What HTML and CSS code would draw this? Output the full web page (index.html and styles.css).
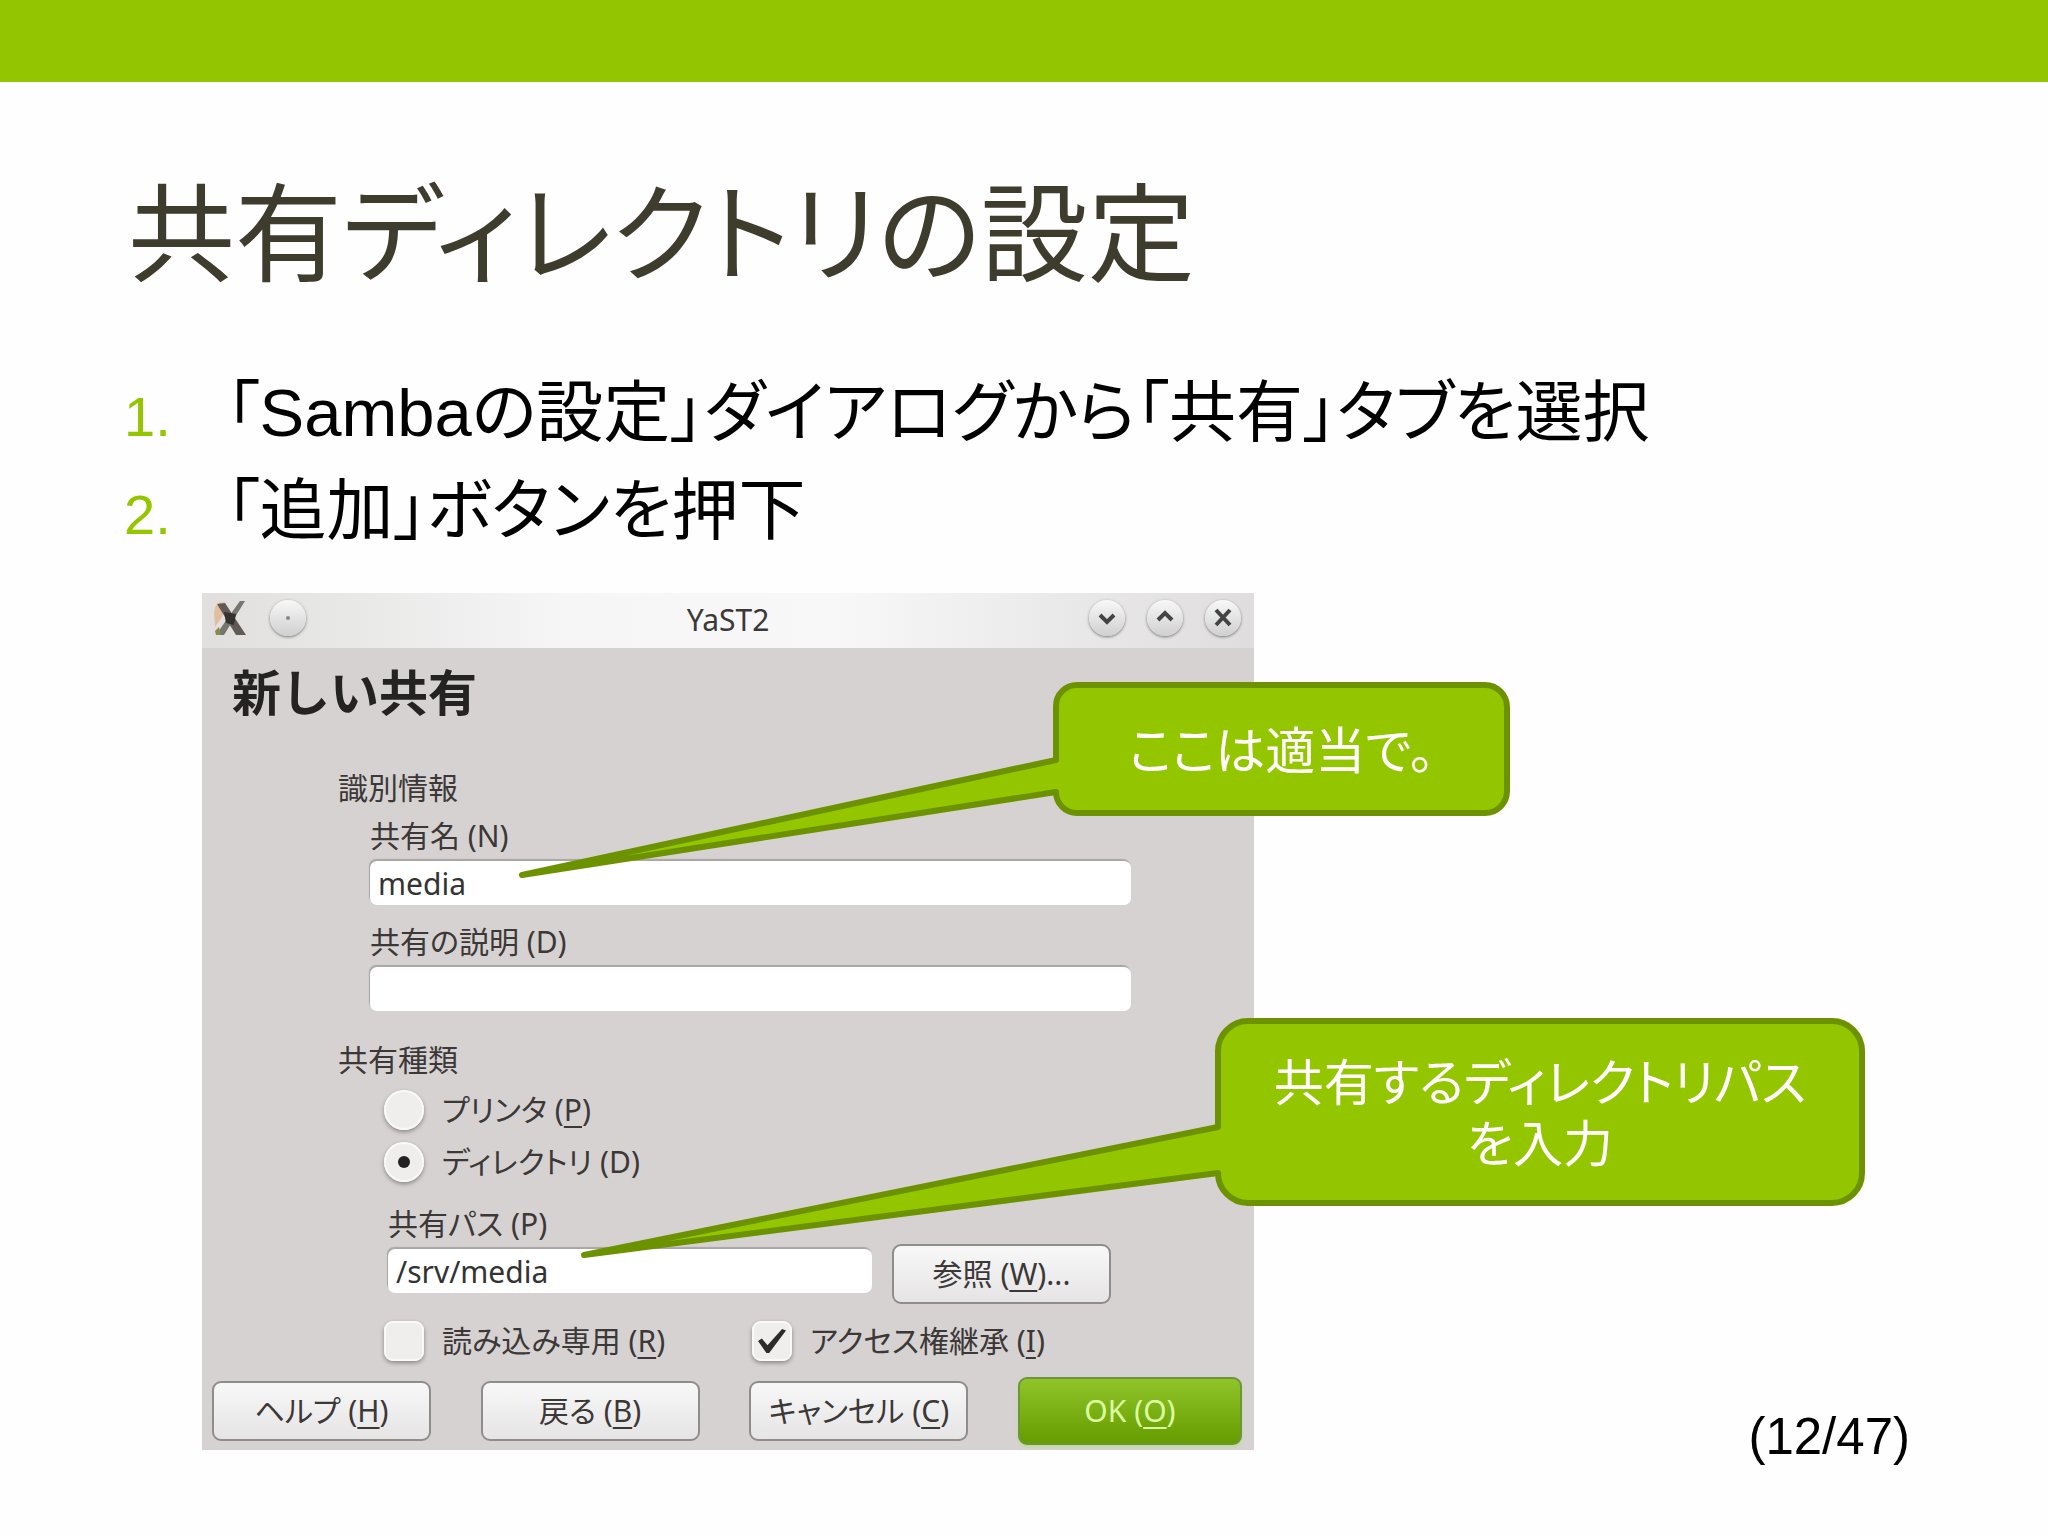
FILE: index.html
```html
<!DOCTYPE html>
<html lang="ja">
<head>
<meta charset="utf-8">
<title>共有ディレクトリの設定</title>
<link rel="stylesheet" href="styles.css">
</head>
<body>
<main class="slide">
  <h1 class="title">共有ディレクトリの設定</h1>
  <ol class="steps">
    <li><span class="num">1.</span><span>「Sambaの設定」ダイアログから「共有」タブを選択</span></li>
    <li><span class="num">2.</span><span>「追加」ボタンを押下</span></li>
  </ol>
  <div class="stage">
    <div class="figure">
      <section class="dialog">
        <header class="titlebar">
          <svg class="app-icon" viewBox="0 0 36 38" aria-hidden="true">
            <path d="M2 14 C3 4 8 2 14 4 L10 18 L3 28 Z" fill="#e3a778" opacity=".6"/>
            <path d="M5 5 L13 4 L34 36 L24 36 Z" fill="#625b55"/>
            <path d="M28 2 L33 2 L12 36 L4 36 L15 20 Z" fill="#77756f"/>
            <path d="M12 13 L24 15 L22 26 L14 24 Z" fill="#35312e"/>
            <path d="M3 32 L7 28 L9 36 L4 36 Z" fill="#8a8b4b"/>
          </svg>
          <button class="round" type="button" aria-label="メニュー"><svg viewBox="0 0 36 36"><circle cx="18" cy="18" r="2" fill="#888"/></svg></button>
          <span class="caption">YaST2</span>
          <div class="controls">
            <button class="round" type="button" aria-label="最小化"><svg viewBox="0 0 36 36"><path d="M11 15 L18 22 L25 15"/></svg></button>
            <button class="round" type="button" aria-label="最大化"><svg viewBox="0 0 36 36"><path d="M11 20 L18 13 L25 20"/></svg></button>
            <button class="round" type="button" aria-label="閉じる"><svg viewBox="0 0 36 36"><path d="M11 10 L25 25 M25 10 L11 25"/></svg></button>
          </div>
        </header>
        <form class="form">
          <h2>新しい共有</h2>
          <h3>識別情報</h3>
          <div class="group">
            <div class="field">
              <label for="name">共有名 (N)</label>
              <input id="name" type="text" value="media">
            </div>
            <div class="field">
              <label for="desc">共有の説明 (D)</label>
              <input id="desc" type="text">
            </div>
          </div>
          <h3 class="kind">共有種類</h3>
          <div class="options">
            <div class="choice"><input id="printer" type="radio" name="kind"><label for="printer">プリンタ (<u>P</u>)</label></div>
            <div class="choice"><input id="dir" type="radio" name="kind" checked><label for="dir">ディレクトリ (D)</label></div>
            <div class="path">
              <div class="field">
                <label for="path">共有パス (P)</label>
                <input id="path" type="text" value="/srv/media">
              </div>
              <button class="btn" type="button">参照 (<u>W</u>)...</button>
            </div>
            <div class="checks">
              <div class="choice"><input id="ro" type="checkbox"><label for="ro">読み込み専用 (<u>R</u>)</label></div>
              <div class="choice"><input id="acl" type="checkbox" checked><label for="acl">アクセス権継承 (<u>I</u>)</label></div>
            </div>
          </div>
          <footer class="actions">
            <button class="btn" type="button">ヘルプ (<u>H</u>)</button>
            <button class="btn" type="button">戻る (<u>B</u>)</button>
            <button class="btn" type="button">キャンセル (<u>C</u>)</button>
            <button class="btn ok" type="button">OK (<u>O</u>)</button>
          </footer>
        </form>
      </section>
      <div class="callout callout-name">
        <svg viewBox="0 0 994 200" aria-hidden="true"><path d="M558 6 H966 a22 22 0 0 1 22 22 V112 a22 22 0 0 1 -22 22 H558 a21 21 0 0 1 -21 -21 L3 196 L537 81 V27 a21 21 0 0 1 21 -21 Z"/></svg>
        <p>ここは適当で。</p>
      </div>
      <div class="callout callout-path">
        <svg viewBox="0 0 1288 244" aria-hidden="true"><path d="M668 6 H1252 a30 30 0 0 1 30 30 V158 a30 30 0 0 1 -30 30 H668 a30 30 0 0 1 -30 -30 L4 240 L638 112 V36 a30 30 0 0 1 30 -30 Z"/></svg>
        <p>共有するディレクトリパス<br>を入力</p>
      </div>
    </div>
    <p class="page">(12/47)</p>
  </div>
</main>
</body>
</html>
```
FILE: styles.css
```css
* { box-sizing: border-box; }
body {
  margin: 0;
  background: #fefefe;
  color: #000;
  font-family: "Liberation Sans", "Noto Sans CJK JP", sans-serif;
  font-feature-settings: "palt";
}
h1, h2, h3, p, ol { margin: 0; padding: 0; font-weight: 400; }

.slide {
  min-height: 100vh;
  border-top: 82px solid #94c600;
  padding: 82px 138px 64px 124px;
}
.title {
  padding-left: 4px;
  color: #3e3d2d;
  font-size: 107px;
  line-height: 144px;
}
.steps {
  list-style: none;
  margin-top: 58px;
  font-size: 67px;
  line-height: 94px;
}
.steps li { display: flex; align-items: baseline; }
.num { flex: none; width: 102px; color: #94c600; font-size: 56px; }

.stage {
  display: flex;
  justify-content: space-between;
  align-items: flex-end;
  margin-top: 31px;
  padding-left: 78px;
}
.figure { position: relative; flex: 0 1 1052px; margin-bottom: 17px; }
.page { font-size: 51px; line-height: 60px; }

.dialog {
  background: #d6d2d1;
  color: #3c3838;
  font-family: "Noto Sans", "Noto Sans CJK JP", sans-serif;
  font-size: 30px;
  line-height: 36px;
}
.titlebar {
  position: relative;
  display: flex;
  align-items: center;
  height: 55px;
  padding: 0 13px 6px 10px;
  background: linear-gradient(90deg, #e0dfde, #f6f6f6 35%, #f8f8f8 60%, #dfdddd);
}
.app-icon { width: 36px; height: 38px; margin-right: 22px; }
.caption { position: absolute; left: 0; right: 0; top: 9px; text-align: center; pointer-events: none; }
.controls { display: flex; gap: 22px; margin-left: auto; }
.round {
  width: 36px;
  height: 36px;
  padding: 0;
  border: 0;
  border-radius: 50%;
  background: linear-gradient(#f8f8f8, #d0d0d0);
  box-shadow: 0 1px 3px #777;
}
.round svg { display: block; fill: none; stroke: #444; stroke-width: 4; }
.round circle { stroke: none; }

.form { padding: 12px 12px 5px 10px; }
.form h2 { padding-left: 20px; font-size: 49px; line-height: 64px; font-weight: 700; color: #252222; font-feature-settings: normal; }
.form h3 { margin-top: 46px; padding-left: 126px; font-size: 30px; }
.form .kind { margin-top: 31px; }
.group { display: flex; flex-direction: column; gap: 19px; padding: 12px 111px 0 158px; }
.field { display: flex; flex-direction: column; gap: 7px; }
.field label, .choice label { white-space: nowrap; }
.field input {
  width: 100%;
  height: 44px;
  padding: 0 8px;
  border: 0;
  border-radius: 7px;
  background: #fff;
  box-shadow: -1px -2px 1px #aaa6a5;
  color: #333;
  font: inherit;
}
.options { padding-left: 172px; }
.choice { display: flex; align-items: center; gap: 18px; height: 40px; margin-top: 12px; }
.choice input {
  appearance: none;
  display: grid;
  place-items: center;
  width: 40px;
  height: 40px;
  margin: 0;
  border-radius: 9px;
  background: #f0eded;
  box-shadow: inset 0 0 0 2px #faf8f8, 0 2px 4px #8b8786;
}
.choice input[type="radio"] { border-radius: 50%; }
.choice input[type="radio"]:checked::before { content: ""; width: 12px; height: 12px; border-radius: 50%; background: #222; }
.choice input[type="checkbox"]:checked::before {
  content: "";
  width: 28px;
  height: 24px;
  background: #2c2c2c;
  clip-path: polygon(0 50%, 14% 40%, 34% 68%, 86% 0, 100% 6%, 40% 100%, 30% 100%);
}
.path { display: flex; align-items: flex-end; gap: 20px; margin-top: 24px; padding-left: 4px; }
.path .field { flex: 0 1 484px; padding-bottom: 11px; }
.checks { display: grid; grid-template-columns: 368px 1fr; margin-top: 5px; }
u { text-decoration-thickness: 2px; text-underline-offset: 5px; }
.btn {
  flex: 0 1 219px;
  height: 60px;
  padding: 0;
  border: 2px solid #8f8c8b;
  border-radius: 9px;
  background: linear-gradient(#f8f8f8, #e6e4e4);
  color: #3c3838;
  font: inherit;
  font-feature-settings: inherit;
  white-space: nowrap;
}
.actions { display: flex; justify-content: space-between; align-items: center; margin-top: 16px; }
.actions .ok {
  flex-basis: 224px;
  height: 68px;
  border-color: #6f9440;
  background: linear-gradient(#8fc529, #679c00);
  box-shadow: 0 2px 3px #b9e08a;
  color: #dcffa0;
}

.callout { position: absolute; color: #fff; }
.callout svg { display: block; width: 100%; fill: #94c600; stroke: #6d9200; stroke-width: 6; stroke-linejoin: round; }
.callout p {
  position: absolute;
  top: 3px;
  right: 3px;
  display: grid;
  place-content: center;
  text-align: center;
  font-size: 50px;
  line-height: 61px;
  white-space: nowrap;
}
.callout-name { left: 317px; top: 86px; width: 994px; }
.callout-name p { width: 457px; height: 140px; }
.callout-path { left: 378px; top: 422px; width: 1288px; }
.callout-path p { width: 650px; height: 194px; }
```
